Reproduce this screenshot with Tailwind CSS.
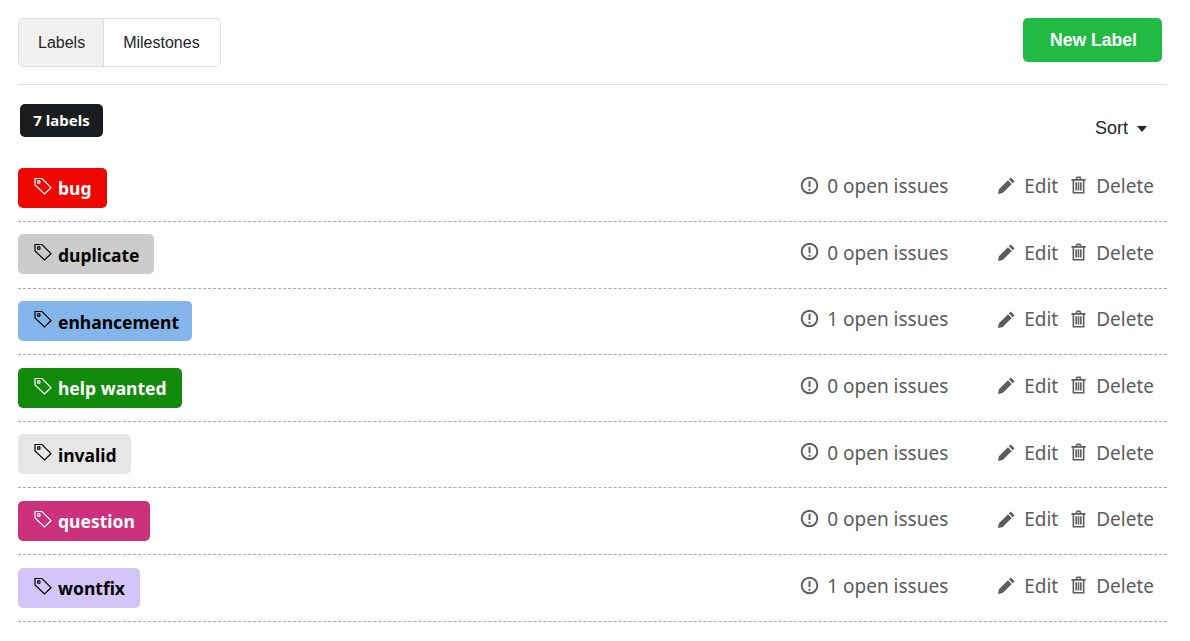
<!DOCTYPE html>
<html lang="en">
<head>
    <meta charset="UTF-8">
    <title>Labels</title>
    <script src="https://cdn.jsdelivr.net/npm/@tailwindcss/browser@4"></script>
</head>
<body class="bg-white font-['Liberation_Sans',sans-serif] overflow-hidden">
    <div class="pl-[18px] pr-[23px] pt-[18px]">
        <!-- Top bar -->
        <div class="flex justify-between items-start h-[67px] border-b border-[#dedede]">
            <div class="flex h-[49px] border border-[#dedede] rounded-[5px] overflow-hidden text-[16px] text-[#212529]">
                <a class="flex items-center pl-[19px] pr-[18px] bg-[#f1f1f1] border-r border-[#dedede]">Labels</a>
                <a class="flex items-center pl-[19px] pr-[20px]">Milestones</a>
            </div>
            <button class="w-[139px] h-[44px] mr-[5px] pl-[2px] bg-[#21ba45] rounded-[5px] text-white text-[17.6px] font-bold">New Label</button>
        </div>

        <!-- Count and sort -->
        <div class="flex justify-between h-[70.2px] pt-[19px] pl-[2px]">
            <span class="flex items-center justify-center w-[83px] h-[33px] bg-[#1b1c1d] rounded-[5px] text-white text-[15px] font-bold font-['Noto_Sans',sans-serif]">7 labels</span>
            <div class="flex items-center h-[49px] pr-[20px] gap-[9px] text-[#212529] text-[18px]">
                Sort
                <span class="w-0 h-0 border-x-[5.5px] border-x-transparent border-t-[6px] border-t-[#212529]"></span>
            </div>
        </div>

        <!-- Label rows -->
        <div class="font-['Noto_Sans',sans-serif]">
            <div class="flex items-center h-[66.67px] border-b border-dashed border-[#aaaaaa]">
                <span class="flex items-center w-[89px] h-[40px] mb-[0.6px] pt-[1.2px] pl-[15px] gap-[5px] rounded-[5px] bg-[#ee0701] text-white text-[17.5px] font-bold">
                    <svg class="w-[20px] h-[20px] -mt-[5px]" viewBox="0 0 20 20" fill="none" stroke="currentColor" stroke-width="1.2"><path d="M2 2.500h7l9 9.200-6.500 6.300-9.500-9z"/><circle cx="5.800" cy="6" r="1.300"/></svg>
                    bug
                </span>
                <div class="ml-auto flex items-center w-[197px] gap-[8px] text-[#5c5c5c] text-[19px] -mt-[3.4px]">
                    <svg class="w-[19px] h-[19px] -mt-[2px]" viewBox="0 0 20 20" fill="none" stroke="#5c5c5c" stroke-width="2"><circle cx="10" cy="10" r="8.200"/><path d="M10 5v6.500M10 13.500v2"/></svg>
                    0 open issues
                </div>
                <div class="flex items-center text-[#5c5c5c] text-[19px] -mt-[3.4px] pr-[13px]">
                    <svg class="w-[19px] h-[19px] mr-[8px] -mt-[1px]" viewBox="0 0 20 20" fill="#5c5c5c"><path d="M14.500 1.500l4 4-2 2-4-4zM11.500 4.500l4 4-9.500 9.500-5 1 1-5z"/></svg>
                    Edit
                    <svg class="w-[15px] h-[18px] ml-[13px] mr-[10px] -mt-[2px]" viewBox="0 0 16 19" fill="none" stroke="#5c5c5c" stroke-width="1.700"><path d="M.5 4h15M5.500 4l1-2.700h3l1 2.700M2.500 4v13.800h11V4M5.500 6.500v8.800M8 6.500v8.800M10.500 6.500v8.800"/></svg>
                    Delete
                </div>
            </div>
            <div class="flex items-center h-[66.67px] border-b border-dashed border-[#aaaaaa]">
                <span class="flex items-center w-[136px] h-[40px] mb-[0.6px] pt-[1.2px] pl-[15px] gap-[5px] rounded-[5px] bg-[#cccccc] text-black text-[17.5px] font-bold">
                    <svg class="w-[20px] h-[20px] -mt-[5px]" viewBox="0 0 20 20" fill="none" stroke="currentColor" stroke-width="1.2"><path d="M2 2.500h7l9 9.200-6.500 6.300-9.500-9z"/><circle cx="5.800" cy="6" r="1.300"/></svg>
                    duplicate
                </span>
                <div class="ml-auto flex items-center w-[197px] gap-[8px] text-[#5c5c5c] text-[19px] -mt-[3.4px]">
                    <svg class="w-[19px] h-[19px] -mt-[2px]" viewBox="0 0 20 20" fill="none" stroke="#5c5c5c" stroke-width="2"><circle cx="10" cy="10" r="8.200"/><path d="M10 5v6.500M10 13.500v2"/></svg>
                    0 open issues
                </div>
                <div class="flex items-center text-[#5c5c5c] text-[19px] -mt-[3.4px] pr-[13px]">
                    <svg class="w-[19px] h-[19px] mr-[8px] -mt-[1px]" viewBox="0 0 20 20" fill="#5c5c5c"><path d="M14.500 1.500l4 4-2 2-4-4zM11.500 4.500l4 4-9.500 9.500-5 1 1-5z"/></svg>
                    Edit
                    <svg class="w-[15px] h-[18px] ml-[13px] mr-[10px] -mt-[2px]" viewBox="0 0 16 19" fill="none" stroke="#5c5c5c" stroke-width="1.700"><path d="M.5 4h15M5.500 4l1-2.700h3l1 2.700M2.500 4v13.800h11V4M5.500 6.500v8.800M8 6.500v8.800M10.500 6.500v8.800"/></svg>
                    Delete
                </div>
            </div>
            <div class="flex items-center h-[66.67px] border-b border-dashed border-[#aaaaaa]">
                <span class="flex items-center w-[174px] h-[40px] mb-[0.6px] pt-[1.2px] pl-[15px] gap-[5px] rounded-[5px] bg-[#84b6eb] text-black text-[17.5px] font-bold">
                    <svg class="w-[20px] h-[20px] -mt-[5px]" viewBox="0 0 20 20" fill="none" stroke="currentColor" stroke-width="1.2"><path d="M2 2.500h7l9 9.200-6.500 6.300-9.500-9z"/><circle cx="5.800" cy="6" r="1.300"/></svg>
                    enhancement
                </span>
                <div class="ml-auto flex items-center w-[197px] gap-[8px] text-[#5c5c5c] text-[19px] -mt-[3.4px]">
                    <svg class="w-[19px] h-[19px] -mt-[2px]" viewBox="0 0 20 20" fill="none" stroke="#5c5c5c" stroke-width="2"><circle cx="10" cy="10" r="8.200"/><path d="M10 5v6.500M10 13.500v2"/></svg>
                    1 open issues
                </div>
                <div class="flex items-center text-[#5c5c5c] text-[19px] -mt-[3.4px] pr-[13px]">
                    <svg class="w-[19px] h-[19px] mr-[8px] -mt-[1px]" viewBox="0 0 20 20" fill="#5c5c5c"><path d="M14.500 1.500l4 4-2 2-4-4zM11.500 4.500l4 4-9.500 9.500-5 1 1-5z"/></svg>
                    Edit
                    <svg class="w-[15px] h-[18px] ml-[13px] mr-[10px] -mt-[2px]" viewBox="0 0 16 19" fill="none" stroke="#5c5c5c" stroke-width="1.700"><path d="M.5 4h15M5.500 4l1-2.700h3l1 2.700M2.500 4v13.800h11V4M5.500 6.500v8.800M8 6.500v8.800M10.500 6.500v8.800"/></svg>
                    Delete
                </div>
            </div>
            <div class="flex items-center h-[66.67px] border-b border-dashed border-[#aaaaaa]">
                <span class="flex items-center w-[164px] h-[40px] mb-[0.6px] pt-[1.2px] pl-[15px] gap-[5px] rounded-[5px] bg-[#128a0c] text-white text-[17.5px] font-bold">
                    <svg class="w-[20px] h-[20px] -mt-[5px]" viewBox="0 0 20 20" fill="none" stroke="currentColor" stroke-width="1.2"><path d="M2 2.500h7l9 9.200-6.500 6.300-9.500-9z"/><circle cx="5.800" cy="6" r="1.300"/></svg>
                    help wanted
                </span>
                <div class="ml-auto flex items-center w-[197px] gap-[8px] text-[#5c5c5c] text-[19px] -mt-[3.4px]">
                    <svg class="w-[19px] h-[19px] -mt-[2px]" viewBox="0 0 20 20" fill="none" stroke="#5c5c5c" stroke-width="2"><circle cx="10" cy="10" r="8.200"/><path d="M10 5v6.500M10 13.500v2"/></svg>
                    0 open issues
                </div>
                <div class="flex items-center text-[#5c5c5c] text-[19px] -mt-[3.4px] pr-[13px]">
                    <svg class="w-[19px] h-[19px] mr-[8px] -mt-[1px]" viewBox="0 0 20 20" fill="#5c5c5c"><path d="M14.500 1.500l4 4-2 2-4-4zM11.500 4.500l4 4-9.500 9.500-5 1 1-5z"/></svg>
                    Edit
                    <svg class="w-[15px] h-[18px] ml-[13px] mr-[10px] -mt-[2px]" viewBox="0 0 16 19" fill="none" stroke="#5c5c5c" stroke-width="1.700"><path d="M.5 4h15M5.500 4l1-2.700h3l1 2.700M2.500 4v13.800h11V4M5.500 6.500v8.800M8 6.500v8.800M10.500 6.500v8.800"/></svg>
                    Delete
                </div>
            </div>
            <div class="flex items-center h-[66.67px] border-b border-dashed border-[#aaaaaa]">
                <span class="flex items-center w-[113px] h-[40px] mb-[0.6px] pt-[1.2px] pl-[15px] gap-[5px] rounded-[5px] bg-[#e6e6e6] text-black text-[17.5px] font-bold">
                    <svg class="w-[20px] h-[20px] -mt-[5px]" viewBox="0 0 20 20" fill="none" stroke="currentColor" stroke-width="1.2"><path d="M2 2.500h7l9 9.200-6.500 6.300-9.500-9z"/><circle cx="5.800" cy="6" r="1.300"/></svg>
                    invalid
                </span>
                <div class="ml-auto flex items-center w-[197px] gap-[8px] text-[#5c5c5c] text-[19px] -mt-[3.4px]">
                    <svg class="w-[19px] h-[19px] -mt-[2px]" viewBox="0 0 20 20" fill="none" stroke="#5c5c5c" stroke-width="2"><circle cx="10" cy="10" r="8.200"/><path d="M10 5v6.500M10 13.500v2"/></svg>
                    0 open issues
                </div>
                <div class="flex items-center text-[#5c5c5c] text-[19px] -mt-[3.4px] pr-[13px]">
                    <svg class="w-[19px] h-[19px] mr-[8px] -mt-[1px]" viewBox="0 0 20 20" fill="#5c5c5c"><path d="M14.500 1.500l4 4-2 2-4-4zM11.500 4.500l4 4-9.500 9.500-5 1 1-5z"/></svg>
                    Edit
                    <svg class="w-[15px] h-[18px] ml-[13px] mr-[10px] -mt-[2px]" viewBox="0 0 16 19" fill="none" stroke="#5c5c5c" stroke-width="1.700"><path d="M.5 4h15M5.500 4l1-2.700h3l1 2.700M2.500 4v13.800h11V4M5.500 6.500v8.800M8 6.500v8.800M10.500 6.500v8.800"/></svg>
                    Delete
                </div>
            </div>
            <div class="flex items-center h-[66.67px] border-b border-dashed border-[#aaaaaa]">
                <span class="flex items-center w-[132px] h-[40px] mb-[0.6px] pt-[1.2px] pl-[15px] gap-[5px] rounded-[5px] bg-[#cc317c] text-white text-[17.5px] font-bold">
                    <svg class="w-[20px] h-[20px] -mt-[5px]" viewBox="0 0 20 20" fill="none" stroke="currentColor" stroke-width="1.2"><path d="M2 2.500h7l9 9.200-6.500 6.300-9.500-9z"/><circle cx="5.800" cy="6" r="1.300"/></svg>
                    question
                </span>
                <div class="ml-auto flex items-center w-[197px] gap-[8px] text-[#5c5c5c] text-[19px] -mt-[3.4px]">
                    <svg class="w-[19px] h-[19px] -mt-[2px]" viewBox="0 0 20 20" fill="none" stroke="#5c5c5c" stroke-width="2"><circle cx="10" cy="10" r="8.200"/><path d="M10 5v6.500M10 13.500v2"/></svg>
                    0 open issues
                </div>
                <div class="flex items-center text-[#5c5c5c] text-[19px] -mt-[3.4px] pr-[13px]">
                    <svg class="w-[19px] h-[19px] mr-[8px] -mt-[1px]" viewBox="0 0 20 20" fill="#5c5c5c"><path d="M14.500 1.500l4 4-2 2-4-4zM11.500 4.500l4 4-9.500 9.500-5 1 1-5z"/></svg>
                    Edit
                    <svg class="w-[15px] h-[18px] ml-[13px] mr-[10px] -mt-[2px]" viewBox="0 0 16 19" fill="none" stroke="#5c5c5c" stroke-width="1.700"><path d="M.5 4h15M5.500 4l1-2.700h3l1 2.700M2.500 4v13.800h11V4M5.500 6.500v8.800M8 6.500v8.800M10.500 6.500v8.800"/></svg>
                    Delete
                </div>
            </div>
            <div class="flex items-center h-[66.67px] border-b border-dashed border-[#aaaaaa]">
                <span class="flex items-center w-[122px] h-[40px] mb-[0.6px] pt-[1.2px] pl-[15px] gap-[5px] rounded-[5px] bg-[#d4c5f9] text-black text-[17.5px] font-bold">
                    <svg class="w-[20px] h-[20px] -mt-[5px]" viewBox="0 0 20 20" fill="none" stroke="currentColor" stroke-width="1.2"><path d="M2 2.500h7l9 9.200-6.500 6.300-9.500-9z"/><circle cx="5.800" cy="6" r="1.300"/></svg>
                    wontfix
                </span>
                <div class="ml-auto flex items-center w-[197px] gap-[8px] text-[#5c5c5c] text-[19px] -mt-[3.4px]">
                    <svg class="w-[19px] h-[19px] -mt-[2px]" viewBox="0 0 20 20" fill="none" stroke="#5c5c5c" stroke-width="2"><circle cx="10" cy="10" r="8.200"/><path d="M10 5v6.500M10 13.500v2"/></svg>
                    1 open issues
                </div>
                <div class="flex items-center text-[#5c5c5c] text-[19px] -mt-[3.4px] pr-[13px]">
                    <svg class="w-[19px] h-[19px] mr-[8px] -mt-[1px]" viewBox="0 0 20 20" fill="#5c5c5c"><path d="M14.500 1.500l4 4-2 2-4-4zM11.500 4.500l4 4-9.500 9.500-5 1 1-5z"/></svg>
                    Edit
                    <svg class="w-[15px] h-[18px] ml-[13px] mr-[10px] -mt-[2px]" viewBox="0 0 16 19" fill="none" stroke="#5c5c5c" stroke-width="1.700"><path d="M.5 4h15M5.500 4l1-2.700h3l1 2.700M2.500 4v13.800h11V4M5.500 6.500v8.800M8 6.500v8.800M10.500 6.500v8.800"/></svg>
                    Delete
                </div>
            </div>
        </div>
    </div>
</body>
</html>
